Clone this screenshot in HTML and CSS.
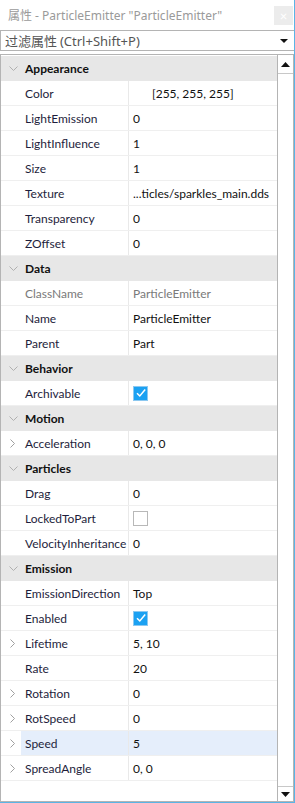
FILE: index.html
```html
<!DOCTYPE html>
<html>
<head>
<meta charset="utf-8">
<link rel="stylesheet" href="styles.css">
</head>
<body>
<div class="window">
  <div class="titlebar">
    <span class="title">属性 - ParticleEmitter "ParticleEmitter"</span>
    <span class="close">×</span>
  </div>
  <div class="filter">
    <span class="filter-text">过滤属性 <span class="latin">(Ctrl+Shift+P)</span></span>
    <svg class="dd" width="8" height="5" viewBox="0 0 8 5"><path d="M0 0H8L4 4Z" fill="#111"/></svg>
  </div>
  <div class="grid">
    <div class="props">
      <div class="cat"><span class="chev"><svg width="9" height="6" viewBox="0 0 9 6"><path d="M0.5 0.5L4.5 4.5L8.5 0.5" fill="none" stroke="#b0b0b0" stroke-width="1"/></svg></span><span class="cat-name">Appearance</span></div>
      <div class="row"><span class="exp"></span><span class="name">Color</span><span class="val"><span class="swatch"></span>[255, 255, 255]</span></div>
      <div class="row"><span class="exp"></span><span class="name">LightEmission</span><span class="val">0</span></div>
      <div class="row"><span class="exp"></span><span class="name">LightInfluence</span><span class="val">1</span></div>
      <div class="row"><span class="exp"></span><span class="name">Size</span><span class="val">1</span></div>
      <div class="row"><span class="exp"></span><span class="name">Texture</span><span class="val">...ticles/sparkles_main.dds</span></div>
      <div class="row"><span class="exp"></span><span class="name">Transparency</span><span class="val">0</span></div>
      <div class="row"><span class="exp"></span><span class="name">ZOffset</span><span class="val">0</span></div>
      <div class="cat"><span class="chev"><svg width="9" height="6" viewBox="0 0 9 6"><path d="M0.5 0.5L4.5 4.5L8.5 0.5" fill="none" stroke="#b0b0b0" stroke-width="1"/></svg></span><span class="cat-name">Data</span></div>
      <div class="row"><span class="exp"></span><span class="name dim">ClassName</span><span class="val dim">ParticleEmitter</span></div>
      <div class="row"><span class="exp"></span><span class="name">Name</span><span class="val">ParticleEmitter</span></div>
      <div class="row"><span class="exp"></span><span class="name">Parent</span><span class="val">Part</span></div>
      <div class="cat"><span class="chev"><svg width="9" height="6" viewBox="0 0 9 6"><path d="M0.5 0.5L4.5 4.5L8.5 0.5" fill="none" stroke="#b0b0b0" stroke-width="1"/></svg></span><span class="cat-name">Behavior</span></div>
      <div class="row"><span class="exp"></span><span class="name">Archivable</span><span class="val"><span class="check on"><svg width="12" height="12" viewBox="0 0 12 12"><path d="M2 6.2L4.8 9L10.2 2.6" fill="none" stroke="#fff" stroke-width="1.5"/></svg></span></span></div>
      <div class="cat"><span class="chev"><svg width="9" height="6" viewBox="0 0 9 6"><path d="M0.5 0.5L4.5 4.5L8.5 0.5" fill="none" stroke="#b0b0b0" stroke-width="1"/></svg></span><span class="cat-name">Motion</span></div>
      <div class="row"><span class="exp"><svg width="6" height="9" viewBox="0 0 6 9"><path d="M0.5 0.5L4.5 4.5L0.5 8.5" fill="none" stroke="#a0a0a0" stroke-width="1"/></svg></span><span class="name">Acceleration</span><span class="val">0, 0, 0</span></div>
      <div class="cat"><span class="chev"><svg width="9" height="6" viewBox="0 0 9 6"><path d="M0.5 0.5L4.5 4.5L8.5 0.5" fill="none" stroke="#b0b0b0" stroke-width="1"/></svg></span><span class="cat-name">Particles</span></div>
      <div class="row"><span class="exp"></span><span class="name">Drag</span><span class="val">0</span></div>
      <div class="row"><span class="exp"></span><span class="name">LockedToPart</span><span class="val"><span class="check"></span></span></div>
      <div class="row"><span class="exp"></span><span class="name">VelocityInheritance</span><span class="val">0</span></div>
      <div class="cat"><span class="chev"><svg width="9" height="6" viewBox="0 0 9 6"><path d="M0.5 0.5L4.5 4.5L8.5 0.5" fill="none" stroke="#b0b0b0" stroke-width="1"/></svg></span><span class="cat-name">Emission</span></div>
      <div class="row"><span class="exp"></span><span class="name">EmissionDirection</span><span class="val">Top</span></div>
      <div class="row"><span class="exp"></span><span class="name">Enabled</span><span class="val"><span class="check on"><svg width="12" height="12" viewBox="0 0 12 12"><path d="M2 6.2L4.8 9L10.2 2.6" fill="none" stroke="#fff" stroke-width="1.5"/></svg></span></span></div>
      <div class="row"><span class="exp"><svg width="6" height="9" viewBox="0 0 6 9"><path d="M0.5 0.5L4.5 4.5L0.5 8.5" fill="none" stroke="#a0a0a0" stroke-width="1"/></svg></span><span class="name">Lifetime</span><span class="val">5, 10</span></div>
      <div class="row"><span class="exp"></span><span class="name">Rate</span><span class="val">20</span></div>
      <div class="row"><span class="exp"><svg width="6" height="9" viewBox="0 0 6 9"><path d="M0.5 0.5L4.5 4.5L0.5 8.5" fill="none" stroke="#a0a0a0" stroke-width="1"/></svg></span><span class="name">Rotation</span><span class="val">0</span></div>
      <div class="row"><span class="exp"><svg width="6" height="9" viewBox="0 0 6 9"><path d="M0.5 0.5L4.5 4.5L0.5 8.5" fill="none" stroke="#a0a0a0" stroke-width="1"/></svg></span><span class="name">RotSpeed</span><span class="val">0</span></div>
      <div class="row sel"><span class="exp"><svg width="6" height="9" viewBox="0 0 6 9"><path d="M0.5 0.5L4.5 4.5L0.5 8.5" fill="none" stroke="#a0a0a0" stroke-width="1"/></svg></span><span class="name">Speed</span><span class="val">5</span></div>
      <div class="row"><span class="exp"><svg width="6" height="9" viewBox="0 0 6 9"><path d="M0.5 0.5L4.5 4.5L0.5 8.5" fill="none" stroke="#a0a0a0" stroke-width="1"/></svg></span><span class="name">SpreadAngle</span><span class="val">0, 0</span></div>
    </div>
    <div class="scrollbar">
      <div class="sb-btn up"><svg width="9" height="5" viewBox="0 0 9 5"><path d="M0 5H9L4.5 0Z" fill="#111"/></svg></div>
      <div class="sb-track"></div>
      <div class="sb-btn down"><svg width="9" height="5" viewBox="0 0 9 5"><path d="M0 0H9L4.5 5Z" fill="#111"/></svg></div>
    </div>
  </div>
</div>
</body>
</html>
```
FILE: styles.css
```css
* { box-sizing: border-box; }
html, body { margin: 0; padding: 0; background: #fff; }
body { font-family: "Lato", "Noto Sans", sans-serif; }
.window {
  width: 295px;
  height: 803px;
  border-right: 1px solid #5ab4e6;
  border-bottom: 1px solid #5ab4e6;
  display: flex;
  flex-direction: column;
  background: #fff;
}
.titlebar {
  height: 30px;
  display: flex;
  align-items: center;
  justify-content: space-between;
  padding: 0 1px 0 8px;
  flex: none;
}
.title {
  font-family: "Noto Sans", "Noto Sans CJK SC", sans-serif;
  font-size: 12px;
  color: #9a9a9a;
  white-space: nowrap;
  padding-bottom: 1px;
}
.close {
  width: 19px;
  height: 19px;
  background: #ececec;
  color: #fff;
  font-size: 13px;
  display: flex;
  align-items: center;
  justify-content: center;
  margin-top: 1px;
}
.filter {
  height: 21px;
  border: 1px solid #b4b4b4;
  border-right: none;
  display: flex;
  align-items: center;
  justify-content: space-between;
  padding: 0 6px 0 4px;
  flex: none;
}
.filter-text {
  font-family: "Noto Sans CJK SC", sans-serif;
  font-size: 13px;
  color: #555;
  white-space: nowrap;
}
.filter-text .latin { font-family: "Noto Sans", sans-serif; font-size: 13px; }
.dd { margin-top: 1px; }
.grid {
  margin-top: 3px;
  flex: 1;
  display: flex;
  border: 1px solid #b4b4b4;
  border-right: none;
  min-height: 0;
}
.props {
  flex: 1;
  padding-top: 1px;
  min-width: 0;
}
.cat, .row {
  height: 25px;
  display: grid;
  grid-template-columns: 20px 108px 1fr;
  align-items: stretch;
  font-size: 12px;
}
.cat {
  background: #e7e7e7;
  display: flex;
  align-items: center;
}
.chev { width: 24px; display: flex; justify-content: center; padding-left: 0; padding-top: 1px; }
.cat-name { font-weight: 700; color: #111; }
.row { border-bottom: 1px solid #efefef; }
.exp { display: flex; align-items: center; justify-content: center; padding-left: 3px; }
.name {
  padding-left: 4px;
  display: flex;
  align-items: center;
  color: #1e1e3c;
  border-right: 1px solid #e9e9e9;
  white-space: nowrap;
  overflow: hidden;
}
.val {
  padding-left: 4px;
  display: flex;
  align-items: center;
  color: #111;
  white-space: nowrap;
  overflow: hidden;
}
.dim { color: #7a7a7a; }
.sel .name, .sel .val { background: #e5eefb; }
.swatch { width: 15px; height: 14px; background: #fff; margin-right: 4px; }
.check {
  width: 15px;
  height: 15px;
  border: 1px solid #b8b8b8;
  background: #fff;
  display: flex;
  align-items: center;
  justify-content: center;
}
.check.on { background: #1ba1f2; border-color: #8cc8f0; }
.scrollbar {
  width: 17px;
  border-left: 1px solid #b4b4b4;
  border-right: 1px solid #b4b4b4;
  display: flex;
  flex-direction: column;
  flex: none;
}
.sb-btn {
  height: 19px;
  display: flex;
  align-items: center;
  justify-content: center;
  flex: none;
}
.sb-btn.up { border-bottom: 1px solid #c8c8c8; }
.sb-btn.down { border-top: 1px solid #c8c8c8; height: 15px; }
.sb-track { flex: 1; }
```
